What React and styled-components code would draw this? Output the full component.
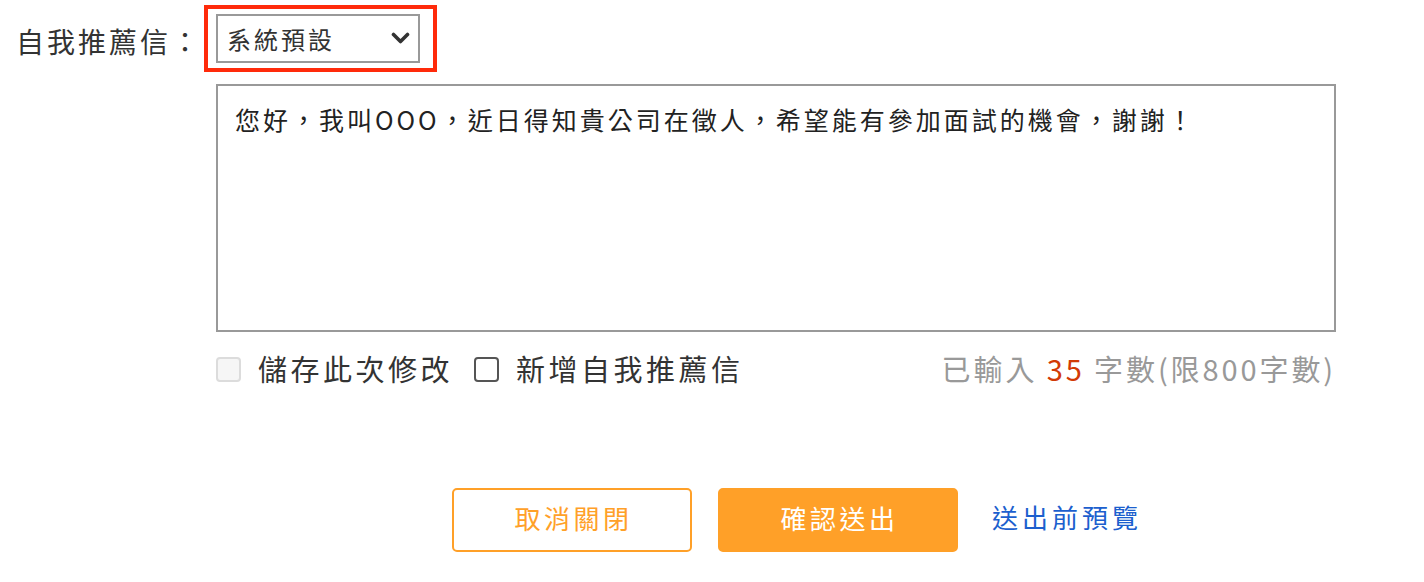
import React from "react";
import styled, { createGlobalStyle } from "styled-components";

const Global = createGlobalStyle`
  html, body { margin: 0; padding: 0; background: #fff; }
  body { font-family: "Noto Sans CJK TC", "Noto Sans", sans-serif; color: #333; }
`;

const Page = styled.div`
  padding: 14px 0 0 17px;
  width: 1319px;
`;

const Row = styled.div`
  display: flex;
  align-items: flex-start;
`;

const Label = styled.div`
  width: 199px;
  height: 49px;
  flex: none;
  font-size: 28px;
  letter-spacing: 3px;
  color: #333;
  line-height: 54px;
  margin-left: -1px;
`;

const Highlight = styled.div`
  position: relative;
  margin-left: 1px;
  &::after {
    content: "";
    position: absolute;
    left: -12px;
    top: -9px;
    right: -17px;
    bottom: -9px;
    border: 4px solid #ff2a0a;
    pointer-events: none;
  }
`;

const SelectBox = styled.div`
  width: 204px;
  height: 49px;
  box-sizing: border-box;
  border: 2px solid #999;
  display: flex;
  align-items: center;
  justify-content: space-between;
  padding: 0 8px 0 9px;
  font-size: 24px;
  letter-spacing: 3px;
  color: #333;
  background: #fff;
`;

const Body = styled.div`
  margin-left: 199px;
  width: 1120px;
`;

const TextArea = styled.textarea`
  display: block;
  margin-top: 21px;
  width: 1120px;
  height: 248px;
  box-sizing: border-box;
  border: 2px solid #999;
  border-radius: 0;
  padding: 15px 17px;
  font-family: "Noto Sans CJK TC", "Noto Sans", sans-serif;
  font-size: 25px;
  letter-spacing: 3px;
  line-height: 1.5;
  color: #222;
  resize: none;
  outline: none;
`;

const Options = styled.div`
  display: flex;
  align-items: center;
  height: 40px;
  margin-top: 16px;
`;

const Check = styled.label`
  display: flex;
  align-items: center;
  margin-right: 21px;
  font-size: 29px;
  letter-spacing: 3.5px;
  color: #333;
`;

const Box = styled.span`
  width: 25px;
  height: 25px;
  box-sizing: border-box;
  border-radius: 4px;
  border: 2px solid ${(p) => (p.disabled ? "#dcdcdc" : "#555")};
  background: ${(p) => (p.disabled ? "#f6f6f6" : "#fff")};
  margin-right: 17px;
  margin-top: 2px;
  flex: none;
`;

const Counter = styled.div`
  margin-left: auto;
  font-size: 29px;
  letter-spacing: 2.9px;
  color: #999;
`;

const Num = styled.span`
  color: #d23a06;
`;

const Actions = styled.div`
  display: flex;
  align-items: center;
  margin-top: 100px;
  padding-left: 435px;
`;

const Button = styled.button`
  width: 240px;
  height: 64px;
  box-sizing: border-box;
  border-radius: 5px;
  border: 2px solid #ffa028;
  background: ${(p) => (p.primary ? "#ffa028" : "#fff")};
  color: ${(p) => (p.primary ? "#fff" : "#ffa028")};
  font-family: "Noto Sans CJK TC", "Noto Sans", sans-serif;
  font-size: 26px;
  letter-spacing: 3.5px;
  margin-right: 26px;
  padding: 0 0 5px 3px;
`;

const Link = styled.a`
  margin-left: 8px;
  margin-bottom: 7px;
  font-size: 26px;
  letter-spacing: 4px;
  color: #1c5fce;
  text-decoration: none;
`;

const Chevron = () => (
  <svg width="19" height="13" viewBox="0 0 19 13">
    <polyline
      points="2.5,2.5 9.5,9.5 16.5,2.5"
      fill="none"
      stroke="#333"
      strokeWidth="3.6"
      strokeLinecap="round"
      strokeLinejoin="round"
    />
  </svg>
);

export default function App() {
  const text =
    "您好，我叫OOO，近日得知貴公司在徵人，希望能有參加面試的機會，謝謝！";
  return (
    <>
      <Global />
      <Page>
        <Row>
          <Label>自我推薦信：</Label>
          <Highlight>
            <SelectBox>
              <span>系統預設</span>
              <Chevron />
            </SelectBox>
          </Highlight>
        </Row>
        <Body>
          <TextArea readOnly value={text} />
          <Options>
            <Check>
              <Box disabled />
              儲存此次修改
            </Check>
            <Check>
              <Box />
              新增自我推薦信
            </Check>
            <Counter>
              已輸入 <Num>35</Num> 字數(限800字數)
            </Counter>
          </Options>
        </Body>
        <Actions>
          <Button>取消關閉</Button>
          <Button primary>確認送出</Button>
          <Link href="#">送出前預覽</Link>
        </Actions>
      </Page>
    </>
  );
}
